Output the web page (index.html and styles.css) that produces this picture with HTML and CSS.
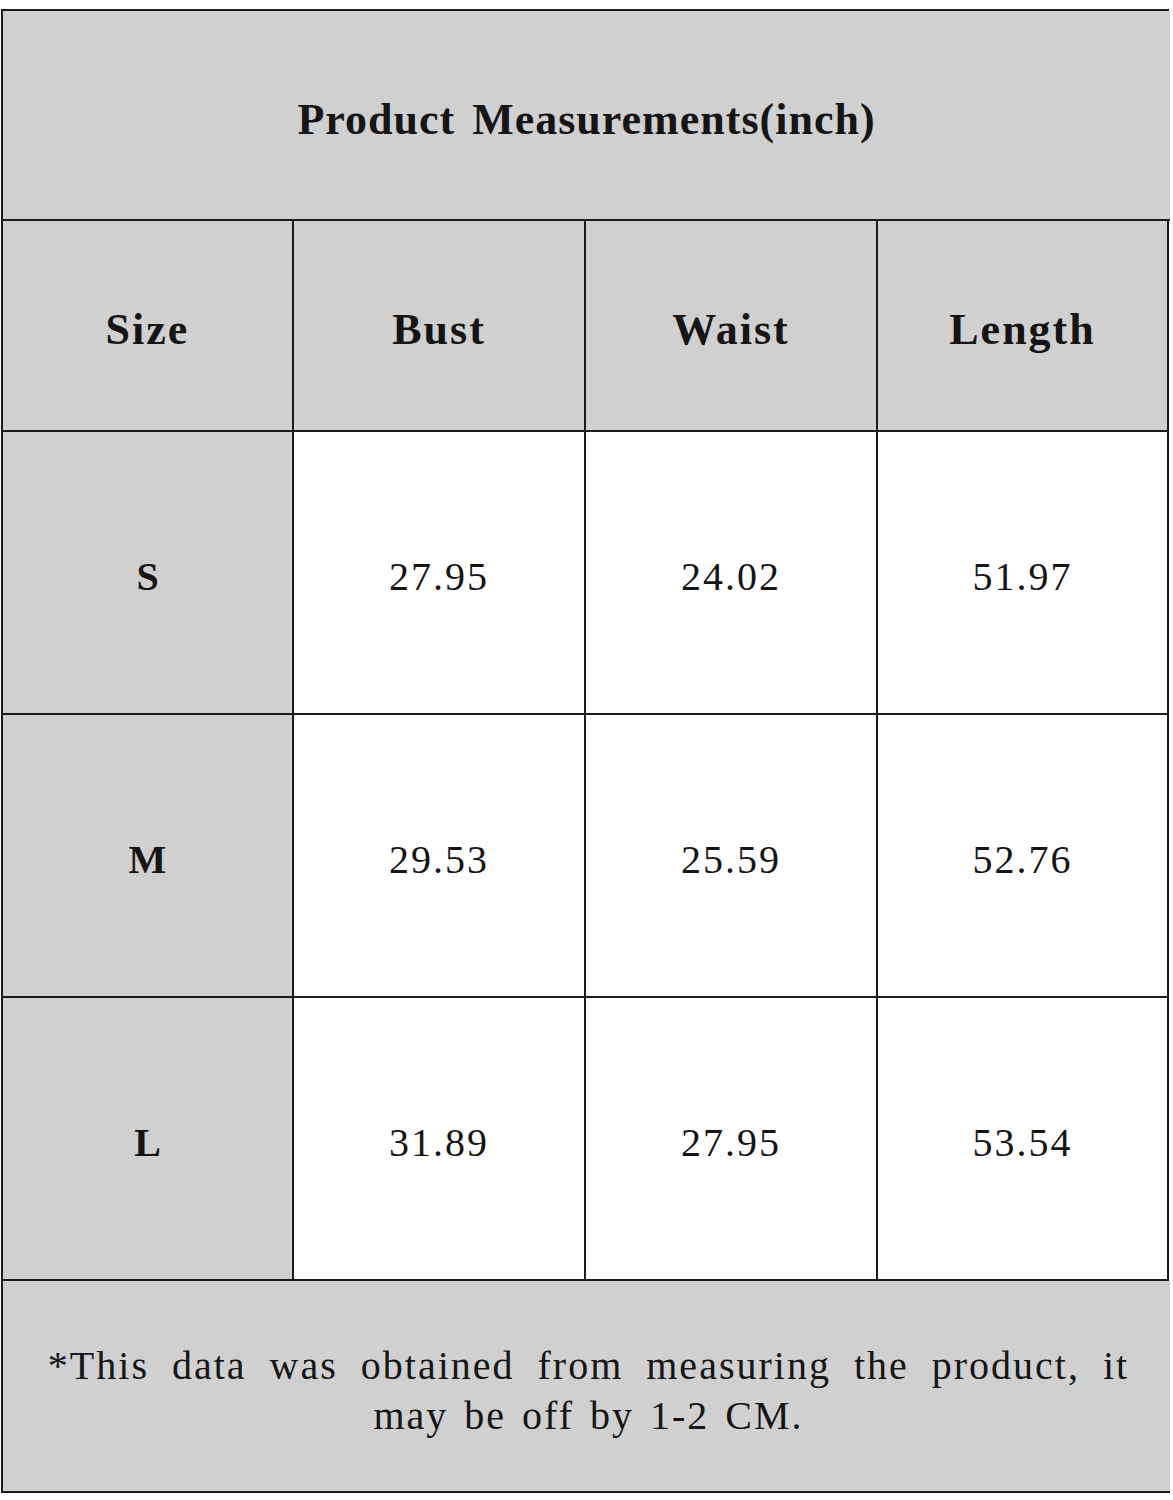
FILE: index.html
```html
<!DOCTYPE html>
<html lang="en">
<head>
<meta charset="utf-8">
<title>Product Measurements</title>
<link rel="stylesheet" href="styles.css">
</head>
<body>
<div class="chart">
  <div class="cell span head title">Product Measurements(inch)</div>

  <div class="cell head">Size</div>
  <div class="cell head">Bust</div>
  <div class="cell head">Waist</div>
  <div class="cell head">Length</div>

  <div class="cell size">S</div>
  <div class="cell val">27.95</div>
  <div class="cell val">24.02</div>
  <div class="cell val">51.97</div>

  <div class="cell size">M</div>
  <div class="cell val">29.53</div>
  <div class="cell val">25.59</div>
  <div class="cell val">52.76</div>

  <div class="cell size">L</div>
  <div class="cell val">31.89</div>
  <div class="cell val">27.95</div>
  <div class="cell val">53.54</div>

  <div class="cell span note"><p class="note-text"><span class="line-one">*This data was obtained from measuring the product, it</span><br><span class="line-two">may be off by 1-2 CM.</span></p></div>
</div>
</body>
</html>
```
FILE: styles.css
```css
html, body {
  margin: 0;
  padding: 0;
  background: #ffffff;
}

body {
  padding: 9px 0 0 1px;
  font-family: "Liberation Serif", "Times New Roman", serif;
  color: #151515;
}

.chart {
  display: grid;
  grid-template-columns: 291px 292px 292px 291px;
  grid-template-rows: 210px 211px 283px 283px 283px 212px;
  width: 1166px;
  border-top: 2px solid #1c1c1c;
  border-left: 2px solid #1c1c1c;
}

.cell {
  box-sizing: border-box;
  border-right: 2px solid #1c1c1c;
  border-bottom: 2px solid #1c1c1c;
  display: flex;
  align-items: center;
  justify-content: center;
  background: #ffffff;
  text-align: center;
}

.span {
  grid-column: 1 / -1;
  border-right: none;
  margin-right: -1px;
  background: #d1d0d1;
}

.head {
  background: #d1d0d1;
  font-weight: bold;
  font-size: 44px;
  letter-spacing: 2px;
  padding-top: 8px;
}

.title {
  padding-top: 9px;
  letter-spacing: 1px;
  word-spacing: 5px;
}

.size {
  background: #d1d0d1;
  font-weight: bold;
  font-size: 40px;
  padding-top: 8px;
}

.val {
  font-size: 40px;
  letter-spacing: 2px;
  padding-top: 8px;
}

.note {
  font-size: 40px;
  line-height: 50px;
  letter-spacing: 2px;
  padding-top: 10px;
  padding-left: 4px;
}

.note-text {
  margin: 0;
}

.line-one {
  word-spacing: 11px;
}

.line-two {
  word-spacing: 4px;
}
```
